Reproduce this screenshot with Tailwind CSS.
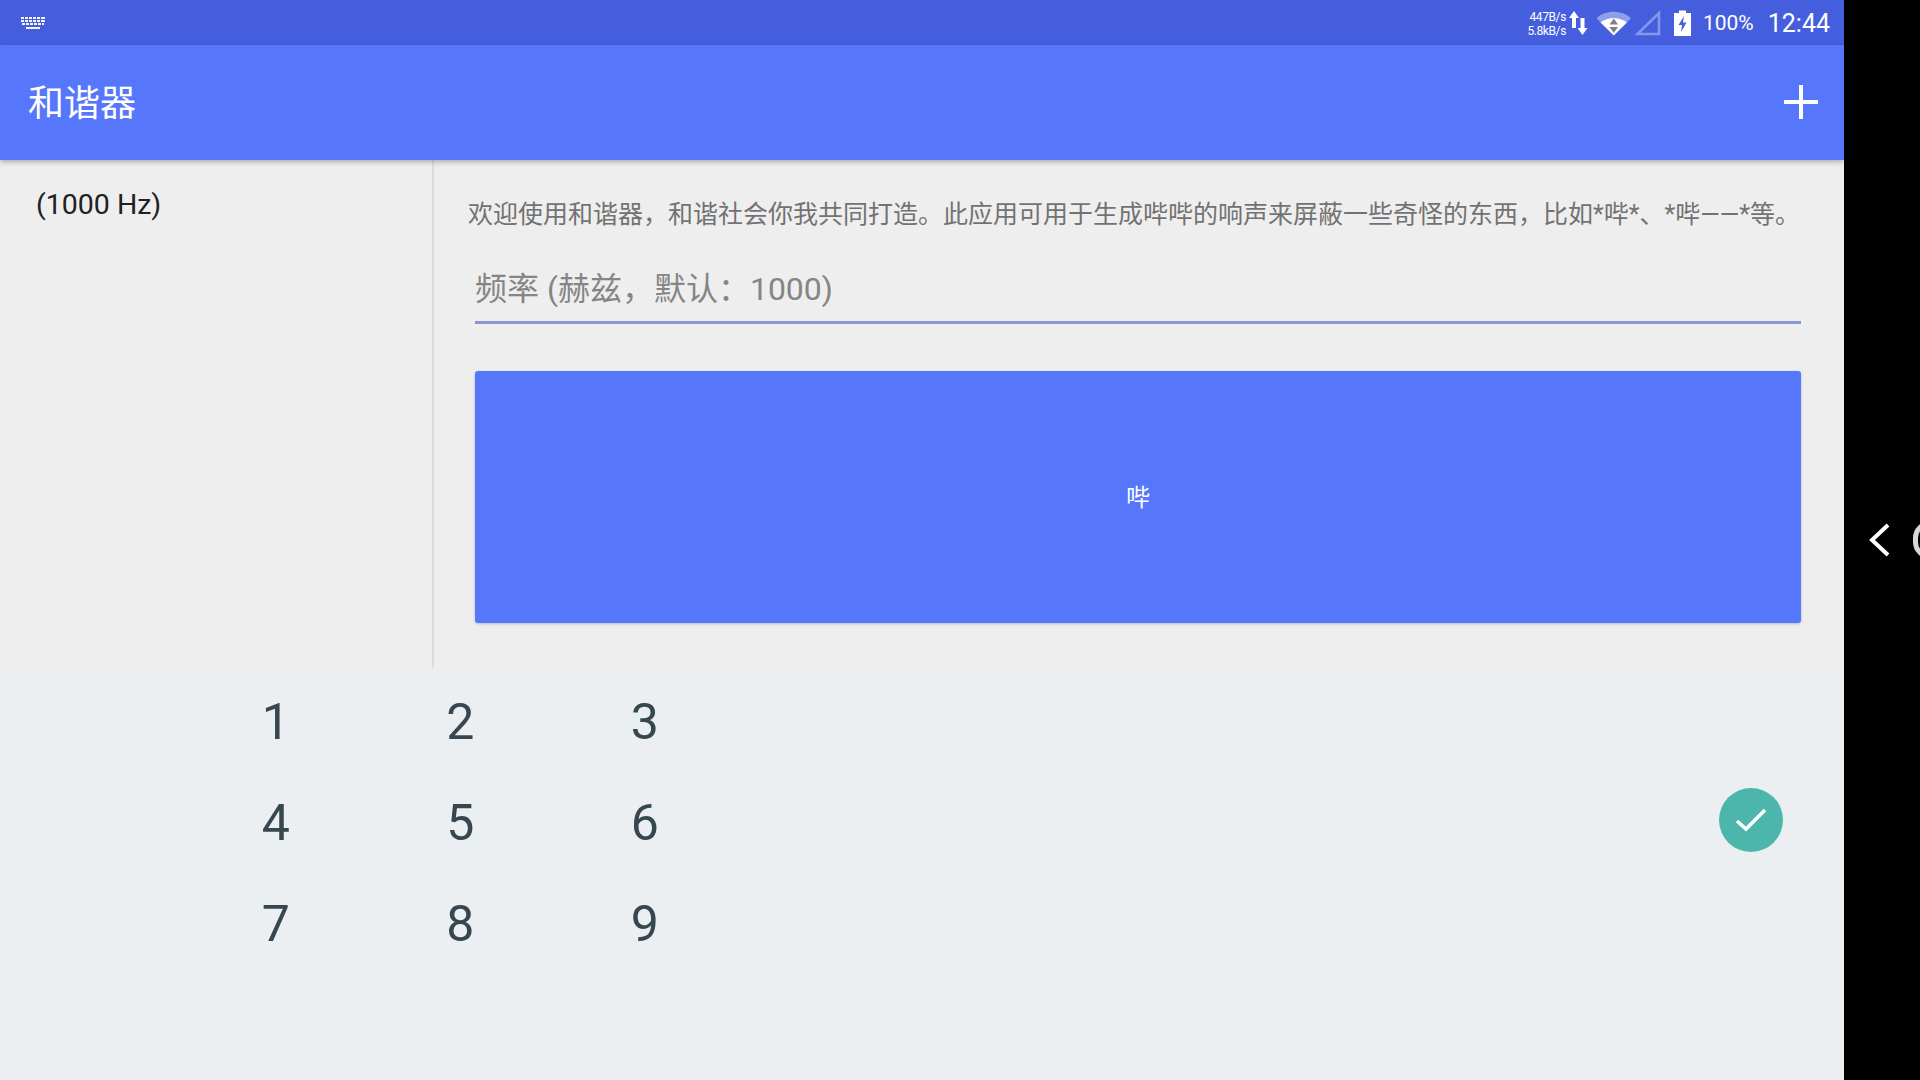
<!DOCTYPE html>
<html lang="zh-CN">

<head>
    <meta charset="UTF-8">
    <meta name="viewport" content="width=device-width, initial-scale=1.0">
    <title>和谐器</title>
    <script src="https://cdn.jsdelivr.net/npm/@tailwindcss/browser@4"></script>
</head>

<body class="bg-black overflow-hidden">
    <div class="flex w-[1920px] h-[1080px] overflow-hidden font-['Roboto','Noto_Sans_CJK_SC',sans-serif]">
        <div class="w-[1844px] h-full flex flex-col shrink-0">
            <!-- status bar -->
            <div class="h-[45px] shrink-0 bg-[#455ede] flex items-center justify-between pl-[20px] pr-[14px] text-white">
                <svg width="26" height="14" viewBox="0 0 26 14" fill="#fff" opacity="0.95">
                    <path d="M1 1h3v2H1zM5 1h3v2H5zM9 1h3v2H9zM13 1h3v2h-3zM17 1h3v2h-3zM21 1h4v2h-4z"/>
                    <path d="M1 4h3v2H1zM5 4h3v2H5zM9 4h3v2H9zM13 4h3v2h-3zM17 4h3v2h-3zM21 4h4v2h-4z"/>
                    <path d="M2 7h3v2H2zM6 7h3v2H6zM10 7h3v2h-3zM14 7h3v2h-3zM18 7h3v2h-3zM22 7h2v2h-2z"/>
                    <path d="M6 11h14v2H6z"/>
                </svg>
                <div class="flex items-center">
                    <div class="flex flex-col items-end text-[12px] tracking-[-0.4px] leading-[14px] mr-[2px] pt-[2px]">
                        <span>447B/s</span>
                        <span>5.8kB/s</span>
                    </div>
                    <svg width="20" height="26" viewBox="0 0 20 26" fill="#fff" class="mr-[8px]">
                        <path d="M6 1 1 8H4V18H8V8H11z"/>
                        <path d="M14.500 25 19.500 18H16.500V8H12.500V18H9.500z"/>
                    </svg>
                    <svg width="36" height="26" viewBox="0 0 36 26" class="mr-[3px]">
                        <path d="M0.500 8C9 -0.500 26 -0.500 35 8L31 12.500C24 6.500 11 6.500 4.500 12.500z" fill="#fff" fill-opacity="0.4"/>
                        <path d="M4.500 12.500C11 6.500 24 6.500 31 12.500L17.750 25.500z" fill="#fff"/>
                        <path d="M17.750 8.500 13.500 14.500H22z" fill="#7f7f7f"/>
                        <path d="M17.750 23 13.500 17H22z" fill="#7f7f7f"/>
                    </svg>
                    <svg width="26" height="26" viewBox="0 0 26 26" class="mr-[13px]">
                        <path d="M2.500 24 24 3V24z" fill="none" stroke="#fff" stroke-opacity="0.35" stroke-width="2.500"/>
                    </svg>
                    <svg width="17" height="26" viewBox="0 0 17 26" class="mr-[12px]">
                        <path d="M5 0.500h7V3h5v23H0V3h5z" fill="#fff"/>
                        <path d="M10 6 4.500 15H8L7 22 12.500 12.500H9z" fill="#455ede"/>
                    </svg>
                    <span class="text-[21px] leading-none mr-[14px] pt-[2px]">100%</span>
                    <span class="text-[25px] leading-none pt-[2px]">12:44</span>
                </div>
            </div>

            <!-- app bar -->
            <div class="h-[115px] shrink-0 bg-[#5677fc] flex items-center justify-between pl-[28px] pr-[25px] relative z-10 shadow-[0_2px_5px_rgba(0,0,0,0.28)]">
                <h1 class="text-[36px] leading-none text-white pt-[2px]">和谐器</h1>
                <svg width="36" height="36" viewBox="0 0 36 36" fill="#fff" class="-mt-[2px]">
                    <path d="M16 1h4v15h15v4H20v15h-4V20H1v-4h15z"/>
                </svg>
            </div>

            <!-- content -->
            <div class="h-[508px] shrink-0 bg-[#eeeeee] flex">
                <div class="w-[434px] shrink-0 border-r-2 border-[#dcdcdc] pl-[36px] pt-[26px]">
                    <p class="text-[28.500px] leading-[38px] text-[#212121]">(1000 Hz)</p>
                </div>
                <div class="flex-1 pl-[34px] pr-[43px] pt-[39px]">
                    <p class="text-[25px] leading-[32px] text-[#727272] whitespace-nowrap">欢迎使用和谐器，和谐社会你我共同打造。此应用可用于生成哔哔的响声来屏蔽一些奇怪的东西，比如*哔*、*哔——*等。</p>
                    <div class="ml-[7px] mt-[25px] h-[68px] border-b-[3px] border-[#8a96d6] flex items-center text-[32px] text-[#858585] leading-none pt-[1px]">频率 (赫兹，默认：1000)</div>
                    <button class="ml-[7px] mt-[47px] w-[1326px] h-[252px] bg-[#5677fc] rounded-[3px] shadow-[0_1px_3px_rgba(0,0,0,0.2)] text-white text-[24px] flex items-center justify-center pt-[2px]">哔</button>
                </div>
            </div>

            <!-- keyboard -->
            <div class="flex-1 bg-[#eceff1] flex justify-between pl-[183.500px] pr-[61px] text-[#37474f]">
                <div class="grid grid-cols-[184.500px_184.500px_184.500px] auto-rows-[101px] text-[50px] pt-[4px] text-center items-center">
                    <span class="-mt-[1px]">1</span><span class="-mt-[1px]">2</span><span class="-mt-[1px]">3</span>
                    <span>4</span><span>5</span><span>6</span>
                    <span>7</span><span>8</span><span>9</span>
                </div>
                <div class="w-[64px] h-[64px] mt-[120px] rounded-full bg-[#4db6ac] flex items-center justify-center">
                    <svg width="32" height="26" viewBox="0 0 32 26" fill="none" stroke="#fff" stroke-width="3.500">
                        <path d="M2 14 11 22 30 3"/>
                    </svg>
                </div>
            </div>
        </div>

        <!-- side panel -->
        <div class="flex-1 relative">
            <svg width="22" height="34" viewBox="0 0 22 34" fill="none" stroke="#fff" stroke-width="4" class="absolute left-[24px] top-[523px]">
                <path d="M20 2 4 17 20 32"/>
            </svg>
            <div class="absolute left-[69px] top-[521px] w-[34px] h-[38px] rounded-full border-[5px] border-[#d8d8d8]"></div>
        </div>
    </div>
</body>

</html>
